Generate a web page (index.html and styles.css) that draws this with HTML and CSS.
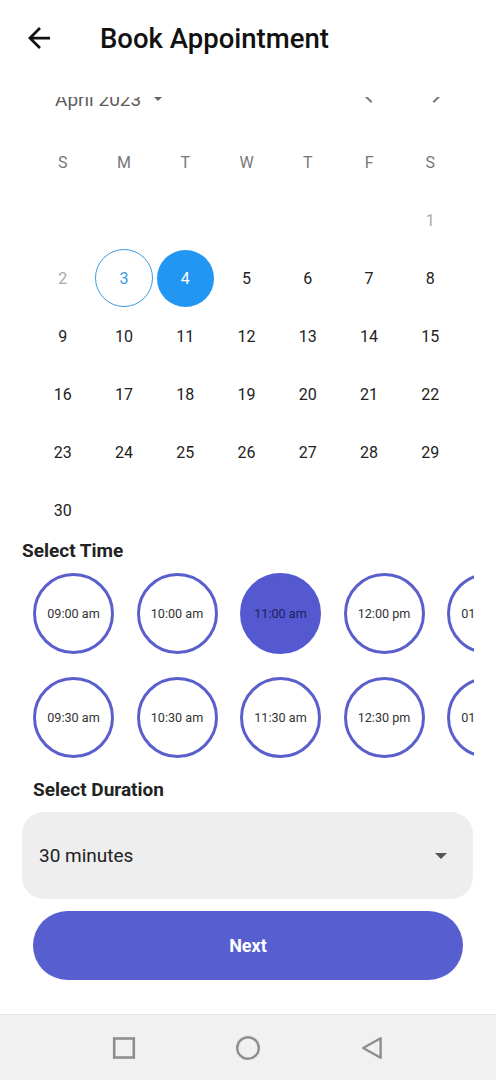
FILE: index.html
```html
<!DOCTYPE html>
<html>
<head>
<meta charset="utf-8">
<link rel="stylesheet" href="styles.css">
</head>
<body>
<div class="screen">
  <header class="appbar">
    <svg class="back" viewBox="4 4 16 16" width="22" height="22"><path d="M20 11H7.83l5.59-5.59L12 4l-8 8 8 8 1.41-1.41L7.83 13H20v-2z" fill="#111"/></svg>
    <h1 class="title">Book Appointment</h1>
  </header>

  <section class="calendar">
    <div class="month-row">
      <div class="month-label">
        <span class="month-text">April 2023</span>
        <svg class="drop" viewBox="0 0 10 5" width="10" height="5"><path d="M0 0l5 5 5-5z" fill="#666"/></svg>
      </div>
      <div class="chevrons">
        <svg viewBox="0 0 24 24" width="24" height="24"><path d="M15.41 7.41L14 6l-6 6 6 6 1.41-1.41L10.83 12z" fill="#777"/></svg>
        <svg viewBox="0 0 24 24" width="24" height="24"><path d="M10 6L8.59 7.41 13.17 12l-4.58 4.59L10 18l6-6z" fill="#777"/></svg>
      </div>
    </div>
    <div class="grid weekdays">
      <span>S</span><span>M</span><span>T</span><span>W</span><span>T</span><span>F</span><span>S</span>
    </div>
    <div class="grid days">
      <span></span><span></span><span></span><span></span><span></span><span></span><span class="day off">1</span>
      <span class="day off">2</span><span class="day today">3</span><span class="day sel">4</span><span class="day">5</span><span class="day">6</span><span class="day">7</span><span class="day">8</span>
      <span class="day">9</span><span class="day">10</span><span class="day">11</span><span class="day">12</span><span class="day">13</span><span class="day">14</span><span class="day">15</span>
      <span class="day">16</span><span class="day">17</span><span class="day">18</span><span class="day">19</span><span class="day">20</span><span class="day">21</span><span class="day">22</span>
      <span class="day">23</span><span class="day">24</span><span class="day">25</span><span class="day">26</span><span class="day">27</span><span class="day">28</span><span class="day">29</span>
      <span class="day">30</span>
    </div>
  </section>

  <h2 class="section-title time-title">Select Time</h2>
  <div class="times">
    <div class="tcol"><div class="slot">09:00 am</div><div class="slot">09:30 am</div></div>
    <div class="tcol"><div class="slot">10:00 am</div><div class="slot">10:30 am</div></div>
    <div class="tcol"><div class="slot active">11:00 am</div><div class="slot">11:30 am</div></div>
    <div class="tcol"><div class="slot">12:00 pm</div><div class="slot">12:30 pm</div></div>
    <div class="tcol"><div class="slot">01:00 pm</div><div class="slot">01:30 pm</div></div>
  </div>

  <h2 class="section-title dur-title">Select Duration</h2>
  <div class="dropdown">
    <span>30 minutes</span>
    <svg viewBox="0 0 12 6" width="12" height="6"><path d="M0 0l6 6 6-6z" fill="#555"/></svg>
  </div>

  <button class="next">Next</button>

  <nav class="navbar">
    <svg viewBox="0 0 24 24" width="24" height="24"><rect x="2.2" y="2.5" width="19.6" height="19" fill="none" stroke="#8f8f8f" stroke-width="2.6"/></svg>
    <svg viewBox="0 0 24 24" width="24" height="24"><circle cx="12" cy="12" r="10.8" fill="none" stroke="#8f8f8f" stroke-width="2.4"/></svg>
    <svg viewBox="0 0 24 24" width="24" height="24"><path d="M20.6 2.2L3.2 12l17.4 9.8z" fill="none" stroke="#8f8f8f" stroke-width="2.4" stroke-linejoin="round"/></svg>
  </nav>
</div>
</body>
</html>
```

FILE: styles.css
```css
* { box-sizing: border-box; }
html, body { margin: 0; padding: 0; background: #fff; }
body { font-family: Roboto, "Noto Sans", "Liberation Sans", sans-serif; color: #222; }

.screen {
  width: 496px;
  height: 1080px;
  display: flex;
  flex-direction: column;
  overflow: hidden;
}

.appbar {
  height: 76px;
  display: flex;
  align-items: center;
  padding-left: 28px;
  flex-shrink: 0;
}
.back { display: block; }
.title {
  margin: 2px 0 0 50px;
  font-size: 27.5px;
  font-weight: 500;
  color: #111;
  line-height: 30px;
}

.calendar {
  margin-top: 21px;
  height: 440px;
  overflow: hidden;
  flex-shrink: 0;
}
.month-row {
  margin-top: -12px;
  height: 24px;
  display: flex;
  align-items: flex-start;
  padding-left: 55px;
  padding-right: 48px;
}
.month-label {
  display: flex;
  align-items: flex-start;
}
.month-text {
  padding-top: 3px;
  font-size: 19px;
  line-height: 24px;
  font-weight: 400;
  color: #5e5e5e;
}
.drop { margin: 11px 0 0 12px; display: block; }
.chevrons {
  margin-left: auto;
  display: flex;
  gap: 43px;
}
.chevrons svg { display: block; }

.grid {
  display: grid;
  grid-template-columns: repeat(7, 1fr);
  width: 429px;
  margin-left: 32px;
}
.grid span {
  height: 58px;
  display: flex;
  align-items: center;
  justify-content: center;
  font-size: 16px;
}
.weekdays { margin-top: 24px; }
.weekdays span { color: #777; }
.day { color: #222; }
.day.off { color: #aaa; }
.day.today, .day.sel {
  width: 58px;
  height: 58px;
  border-radius: 50%;
  justify-self: center;
}
.day.today { border: 1.5px solid #3d9be0; color: #3d9be0; }
.day.sel { background: #2196f3; color: #fff; width: 57px; height: 57px; margin-top: 0.5px; }

.section-title {
  margin: 0;
  font-size: 19px;
  font-weight: 700;
  line-height: 22px;
  color: #222;
  flex-shrink: 0;
}
.time-title { margin-top: 3px; margin-left: 22px; }

.times {
  margin: 11px 0 0 22px;
  width: 452px;
  padding-left: 11px;
  display: flex;
  gap: 22.5px;
  overflow: hidden;
  flex-shrink: 0;
}
.tcol {
  display: flex;
  flex-direction: column;
  gap: 23px;
  flex-shrink: 0;
}
.slot {
  width: 81px;
  height: 81px;
  border-radius: 50%;
  border: 3px solid #5a5fcc;
  display: flex;
  align-items: center;
  justify-content: center;
  font-size: 12.6px;
  color: #333;
  white-space: nowrap;
}
.slot.active { background: #5459d0; border-color: #5459d0; color: #1f2060; }

.dur-title { margin-top: 21px; margin-left: 33px; }

.dropdown {
  margin: 11px 0 0 22px;
  width: 451px;
  height: 87px;
  border-radius: 22px;
  background: #eeeeee;
  display: flex;
  align-items: center;
  justify-content: space-between;
  padding: 0 26px 0 17px;
  font-size: 19px;
  color: #222;
  flex-shrink: 0;
}
.dropdown svg { display: block; margin-top: 1px; }

.next {
  margin: 12px 0 0 33px;
  width: 430px;
  height: 69px;
  border: none;
  border-radius: 35px;
  background: #565ed0;
  color: #fff;
  font-family: Roboto, "Noto Sans", "Liberation Sans", sans-serif;
  font-size: 18px;
  font-weight: 700;
  flex-shrink: 0;
}

.navbar {
  margin-top: auto;
  height: 66px;
  background: #f1f1f1;
  border-top: 1px solid #e8e8e8;
  display: flex;
  align-items: center;
  justify-content: center;
  gap: 100px;
  flex-shrink: 0;
}
.navbar svg { display: block; }
```
